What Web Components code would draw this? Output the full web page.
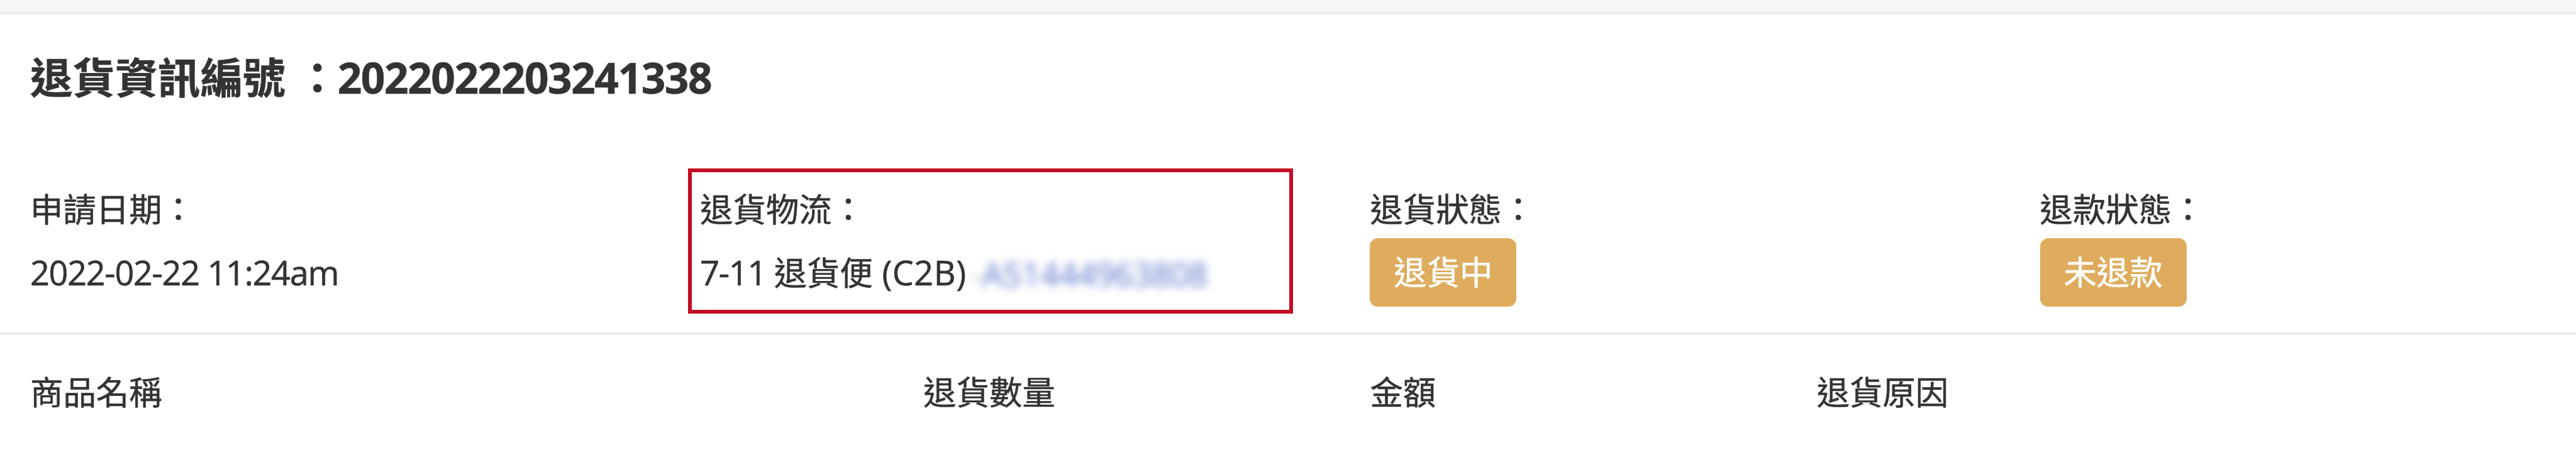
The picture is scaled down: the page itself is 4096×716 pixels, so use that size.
<!DOCTYPE html>
<html lang="zh-Hant">
<head>
<meta charset="utf-8">
<title>退貨資訊</title>
<style>
    body{
        margin: 0;
        background: #fff;
        color: #323433;
        font-family: "Open Sans", "Noto Sans", "Noto Sans CJK TC", sans-serif;
        font-size: 52.4px;
        -webkit-text-stroke: .6px currentColor;
        overflow: hidden;
    }
    .carrier{
        --tracking: .5px;
    }
</style>
</head>
<body>
<return-panel>
    <return-title slot="title" number="2022022203241338">退貨資訊編號 ：</return-title>
    <info-field label="申請日期："><latin-text>2022-02-22 11:24am</latin-text></info-field>
    <info-field label="退貨物流：" marked><latin-text>7-11 </latin-text>退貨便<latin-text class="carrier"> (C2B)</latin-text><masked-code>A51444963808</masked-code></info-field>
    <info-field label="退貨狀態："><status-badge>退貨中</status-badge></info-field>
    <info-field label="退款狀態："><status-badge>未退款</status-badge></info-field>
    <item-header slot="items">
        <span>商品名稱</span>
        <span>退貨數量</span>
        <span>金額</span>
        <span>退貨原因</span>
    </item-header>
</return-panel>

<script>
class ReturnPanel extends HTMLElement {
    constructor(){
        super();
        this.attachShadow({mode:'open'});
        this.shadowRoot.innerHTML = `
            <style>
                :host{
                    display: flex;
                    flex-direction: column;
                    height: 716px;
                }
                .band{
                    height: 19px;
                    background-color: #f6f6f9;
                }
                .line{
                    height: 4px;
                    background-color: #ebebe9;
                }
                .divider{
                    height: 4px;
                    background-color: #ececec;
                }
                .title{
                    height: 204px;
                    padding: 0 48px;
                }
                .fields{
                    display: grid;
                    grid-template-columns: repeat(3, 1065.2px) 1fr;
                    height: 302px;
                    padding-left: 48px;
                }
            </style>
            <div class="band"></div>
            <div class="line"></div>
            <div class="title"><slot name="title"></slot></div>
            <div class="fields"><slot></slot></div>
            <div class="divider"></div>
            <slot name="items"></slot>
        `;
    }
}

class ReturnTitle extends HTMLElement {
    constructor(){
        super();
        this.attachShadow({mode:'open'});
        this.shadowRoot.innerHTML = `
            <style>
                :host{
                    display: block;
                    padding-top: 50px;
                    font-size: 67.6px;
                    font-weight: 700;
                    line-height: 100px;
                    white-space: nowrap;
                }
                .number{
                    margin-left: -2px;
                    letter-spacing: -1.5px;
                }
            </style>
            <slot></slot><span class="number">${this.getAttribute('number') || ''}</span>
        `;
    }
}

class InfoField extends HTMLElement {
    constructor(){
        super();
        this.attachShadow({mode:'open'});
        this.shadowRoot.innerHTML = `
            <style>
                :host{
                    display: block;
                    position: relative;
                    padding-top: 56px;
                    white-space: nowrap;
                }
                .label{
                    height: 96px;
                    line-height: 99px;
                }
                .value{
                    display: flex;
                    height: 109px;
                    line-height: 109px;
                }
                /* frame drawn over the cell, a little wider than its text */
                :host([marked])::after{
                    content: "";
                    position: absolute;
                    left: -19.5px;
                    top: 40.5px;
                    width: 962px;
                    height: 231px;
                    box-sizing: border-box;
                    border: 6px solid #c30d20;
                }
            </style>
            <div class="label">${this.getAttribute('label') || ''}</div>
            <div class="value"><slot></slot></div>
        `;
    }
}

class LatinText extends HTMLElement {
    constructor(){
        super();
        this.attachShadow({mode:'open'});
        this.shadowRoot.innerHTML = `
            <style>
                :host{
                    display: block;
                    font-size: 54px;
                    letter-spacing: var(--tracking, -1.3px);
                }
                span{
                    white-space: pre;
                }
            </style>
            <span><slot></slot></span>
        `;
    }
}

class MaskedCode extends HTMLElement {
    constructor(){
        super();
        this.attachShadow({mode:'open'});
        this.shadowRoot.innerHTML = `
            <style>
                :host{
                    display: block;
                    padding: 2px 0 0 9px;
                    letter-spacing: -.4px;
                    color: #6f87d0;
                    filter: blur(7px);
                }
                .dash{
                    color: #c8c8c8;
                }
            </style>
            <span class="dash">-</span><slot></slot>
        `;
    }
}

class StatusBadge extends HTMLElement {
    constructor(){
        super();
        this.attachShadow({mode:'open'});
        this.shadowRoot.innerHTML = `
            <style>
                :host{
                    display: block;
                    box-sizing: border-box;
                    width: 233px;
                    height: 109px;
                    border-radius: 13px;
                    background-color: #dfac5e;
                    color: #fff;
                    text-align: center;
                    line-height: 108px;
                }
            </style>
            <slot></slot>
        `;
    }
}

class ItemHeader extends HTMLElement {
    constructor(){
        super();
        this.attachShadow({mode:'open'});
        this.shadowRoot.innerHTML = `
            <style>
                :host{
                    display: grid;
                    grid-template-columns: 1420.3px 710.2px 710.2px 1fr;
                    padding: 41px 0 0 48px;
                    line-height: 100px;
                }
            </style>
            <slot></slot>
        `;
    }
}

customElements.define('return-panel', ReturnPanel);
customElements.define('return-title', ReturnTitle);
customElements.define('info-field', InfoField);
customElements.define('latin-text', LatinText);
customElements.define('masked-code', MaskedCode);
customElements.define('status-badge', StatusBadge);
customElements.define('item-header', ItemHeader);
</script>
</body>
</html>
